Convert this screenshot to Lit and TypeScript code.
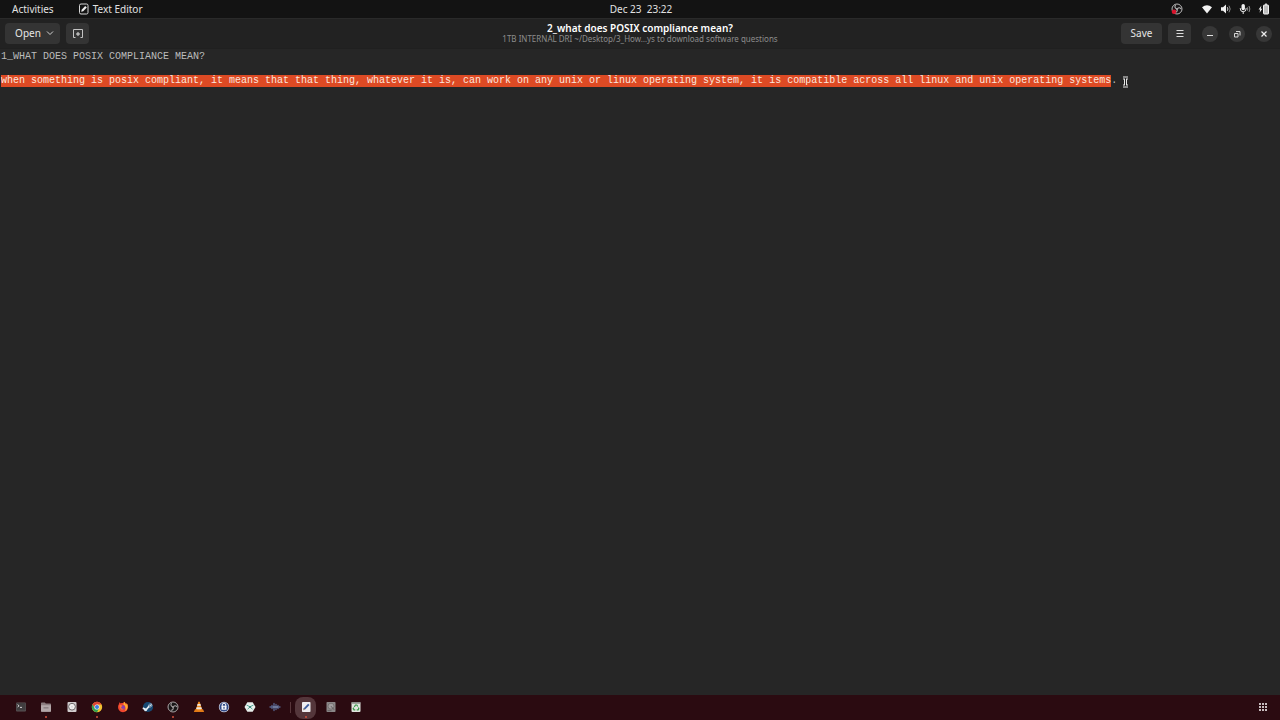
import { LitElement, html, css, svg } from "lit";
import { customElement, query } from "lit/decorators.js";

const TEXT = `1_WHAT DOES POSIX COMPLIANCE MEAN?

when something is posix compliant, it means that that thing, whatever it is, can work on any unix or linux operating system, it is compatible across all linux and unix operating systems.`;

interface DockItem {
  name: string;
  art: unknown;
  running?: boolean;
  active?: boolean;
}

const obs = (line: string) => svg`
  <circle cx="6" cy="6" r="5" fill="#181617" stroke=${line} stroke-width="1"/>
  <path d="M5.6 5.8C3.8 5.2 3.4 3.4 4.6 2.1M6.5 5.7C7.6 4.2 9.3 4.4 10 6M6.1 6.5C6.6 8.3 5.4 9.5 3.7 9.2" fill="none" stroke=${line} stroke-width="1.1"/>
  <circle cx="6" cy="6" r="1" fill=${line}/>`;

const pinned: DockItem[] = [
  { name: "Terminal", art: svg`<rect x="1" y="1.5" width="10" height="9" rx="1" fill="#5a5557"/><rect x="1.5" y="2" width="9" height="7.5" rx=".5" fill="#403d3f"/><path d="M2.6 3.6l1.5 1.2-1.5 1.2M5 6.4h2" fill="none" stroke="#e4e2e3" stroke-width=".9"/>` },
  { name: "Files", running: true, art: svg`<path d="M1 2.3q0-.8.8-.8h3l1 1h4.4q.8 0 .8.8V10q0 .8-.8.8H1.8Q1 10.800 1 10z" fill="#8c7d80"/><path d="M1 4.200h10V10q0 .8-.8.8H1.800Q1 10.800 1 10z" fill="#b3a7a9"/><rect x="3.500" y="6" width="5" height="1.600" fill="#8f8386"/>` },
  { name: "Disks", art: svg`<rect x="1.500" y="1" width="9" height="10" rx="1" fill="#d2cdcf"/><circle cx="6" cy="5.700" r="3.400" fill="#f1efef" stroke="#6c6769" stroke-width="1"/><circle cx="6" cy="5.700" r="1" fill="#dcd8da"/>` },
  { name: "Google Chrome", running: true, art: svg`<circle cx="6" cy="6" r="5.200" fill="#f3c332"/><path d="M1.500 3.400A5.200 5.200 0 0 1 10.500 3.400H6L3.750 7.300z" fill="#dc4434"/><path d="M1.500 3.400A5.200 5.200 0 0 0 6 11.200L8.200 7.300H3.750z" fill="#32a252"/><circle cx="6" cy="6" r="2.600" fill="#f3f3f3"/><circle cx="6" cy="6" r="2" fill="#3c7ee0"/>` },
  { name: "Firefox", art: svg`<path d="M2 3l.4-1.700 1.400 1.200C5 1.800 5.500 2 6.300 2.200L7 .7C8.300 1.300 9 2.600 9.100 3.100l.7-.8C12.500 6.500 10.100 11.200 6 11.200 1.800 11.200-.3 6.500 2 3z" fill="#f0452f"/><path d="M7 .7c1.600 1.300 1.500 2.500 2.200 3.400l.6-1.800c2 3.700.3 7.200-2.100 8C9.500 8.500 8.500 4.200 6.300 3.600z" fill="#ffae32"/><circle cx="5.700" cy="6.500" r="2.300" fill="#8142b5"/><path d="M2.500 4.200c1.300-.3 2.200 0 3 .8L4 6.200c.4 1.400 1.900 1.800 3 1.300C5.800 9.700 2.600 8.900 2.500 4.200z" fill="#ff762e"/>` },
  { name: "Steam", art: svg`<circle cx="6" cy="6" r="5.100" fill="#174872"/><path d="M1 6.300l3 1.200 2-2.200.3-1.300 1.600-1.600 2 .4.500 1.800-1.600 1.700-1.700.3-1.700 1.900-.8 1.500-1.800.2-1-1.600-1.300-.6z" fill="#e6eef4"/><circle cx="8.200" cy="4.300" r="1.200" fill="#e6eef4" stroke="#174872" stroke-width=".7"/>` },
  { name: "OBS Studio", running: true, art: obs("#aaa4a6") },
  { name: "VLC media player", art: svg`<path d="M2 8.200h8l1.200 2.800H.8z" fill="#e17a17"/><path d="M5.300.8h1.400l2.500 8q-3.200 1.500-6.400 0z" fill="#ef8b20"/><path d="M4.600 3h2.800l.6 1.800H4zM3.600 6.200h4.800l.5 1.600q-2.900 1-5.800 0z" fill="#eee7df"/>` },
  { name: "KeePassXC", art: svg`<circle cx="6" cy="6" r="5.200" fill="#d5d9e8"/><circle cx="6" cy="6" r="4.500" fill="#304986"/><path d="M4.200 5V4a1.800 1.800 0 0 1 3.600 0v1" fill="none" stroke="#fff" stroke-width="1"/><rect x="3.500" y="4.800" width="5" height="4" rx=".5" fill="#f6f7fb"/><rect x="5.400" y="5.800" width="1.200" height="2" fill="#304986"/>` },
  { name: "Password manager", art: svg`<path d="M3.300 1.200h5.400L11.500 6l-2.800 4.800H3.300L.5 6z" fill="#e9efec"/><path d="M2.500 4l3.500 1.800L9.500 4M3.500 8.400L6 5.800l2.500 2.600" fill="none" stroke="#57a99a" stroke-width="1"/><circle cx="6" cy="6" r="1" fill="#2f8072"/>` },
  { name: "Audio tool", art: svg`<path d="M1 6h10M3 4.500v3M5 2.500v7M7 3.500v5M9 4.500v3" fill="none" stroke="#56618a" stroke-width="1.400" stroke-linecap="round"/><path d="M4 6h5" stroke="#8995b2" stroke-width="1"/>` },
];

const others: DockItem[] = [
  { name: "Text Editor", running: true, active: true, art: svg`<rect x="2" y="1" width="8.500" height="10" rx=".8" fill="#eeedf1"/><path d="M3.200 9.200l.6-2 4.300-4.500 1.400 1.300-4.400 4.500z" fill="#3d5d9e"/><path d="M3.200 9.200l.6-2 1.300 1.300z" fill="#c2a36c"/>` },
  { name: "Disk volume", art: svg`<rect x="1.500" y="1" width="9" height="10" rx=".8" fill="#8b8788"/><circle cx="6" cy="5.200" r="3" fill="#a29e9f" stroke="#6d696a" stroke-width=".8"/><path d="M6 5.200l3 3.500" stroke="#5f5b5c" stroke-width="1"/><rect x="2.500" y="9.200" width="4" height=".9" fill="#656162"/>` },
  { name: "Trash", art: svg`<rect x="1.500" y="1" width="9" height="10" rx="1" fill="#e2e5df"/><rect x="1.500" y="1" width="9" height="1.800" rx=".8" fill="#8e918c"/><path d="M4.300 5.800L5.500 4h1.300l1 1.500M8.400 6.500l.4 1.200-.7 1.200H6.700M5.300 8.900H4l-.8-1.200.6-1.100" fill="none" stroke="#3b9a4c" stroke-width="1.200"/>` },
];

@customElement("app-root")
export class AppRoot extends LitElement {
  static styles = css`
    :host {
      display: flex;
      flex-direction: column;
      min-height: 100vh;
      background: #262626;
      color: #e6e6e6;
      font: 10px/12px "Noto Sans", "Open Sans", sans-serif;
    }
    * { box-sizing: border-box; }
    svg { display: block; }
    button {
      font: inherit;
      color: inherit;
      border: 0;
      padding: 0;
      background: none;
      display: flex;
      align-items: center;
      justify-content: center;
    }
    .topbar {
      display: grid;
      grid-template-columns: 1fr auto 1fr;
      align-items: center;
      height: 18px;
      padding: 0 10px 0 12px;
      background: #131313;
      color: #e2e2e2;
    }
    .left { display: flex; gap: 24px; }
    .app { gap: 3px; }
    .clock { white-space: pre; }
    .tray { display: flex; justify-content: flex-end; align-items: center; gap: 7px; }
    .recorder { margin-right: 11px; }
    .header {
      display: grid;
      grid-template-columns: 1fr auto 1fr;
      align-items: center;
      height: 31px;
      padding: 0 5px;
      background: #222;
      border-top: 1px solid #2a2a2a;
      border-bottom: 1px solid #202020;
    }
    .group { display: flex; align-items: center; gap: 6px; }
    .end { justify-content: flex-end; }
    .btn { height: 21px; padding-bottom: 2px; border-radius: 4px; background: #343434; }
    .open { width: 55px; gap: 5px; padding-left: 4px; }
    .save { width: 41px; }
    .square { width: 23px; }
    .windows { display: flex; gap: 11px; padding: 0 3px 0 5px; }
    .round { width: 16px; height: 16px; border-radius: 50%; background: #373737; }
    .titles { text-align: center; }
    .title { margin: 0; font-size: 10px; line-height: 11px; font-weight: 600; color: #fff; }
    .path { margin: 0; font-size: 8px; line-height: 10px; color: #8c8c8c; }
    .editor { position: relative; flex: 1; display: flex; }
    .text {
      flex: 1;
      resize: none;
      border: 0;
      outline: 0;
      margin: 0;
      padding: 2px 1px;
      background: #262626;
      color: #bcbcbc;
      caret-color: transparent;
      font: 10px/12px "Liberation Mono", monospace;
    }
    .text::selection { background: #dd4a24; color: #fbe6df; }
    .pointer { position: absolute; left: 1121px; top: 27px; }
    .dock {
      display: flex;
      align-items: center;
      height: 25px;
      padding: 0 10px 0 8px;
      background: #2b0b11;
    }
    .apps { display: flex; }
    .pinned { width: 280px; }
    .others { width: 76px; }
    .slot { position: relative; flex: 1; height: 24px; padding-bottom: 1px; }
    .active::before {
      content: "";
      position: absolute;
      inset: 1px 2px;
      border-radius: 8px;
      background: #54363b;
    }
    .slot svg { position: relative; }
    .running::after {
      content: "";
      position: absolute;
      bottom: 2px;
      left: 50%;
      width: 2px;
      height: 2px;
      margin-left: -1px;
      border-radius: 50%;
      background: #d3513c;
    }
    .rule { width: 1px; height: 11px; margin: 0 2px; background: #58363b; }
    .grid { margin-left: auto; width: 14px; height: 24px; padding-bottom: 1px; }
  `;

  @query(".text") private editor!: HTMLTextAreaElement;

  firstUpdated() {
    this.editor.focus();
    this.editor.setSelectionRange(TEXT.indexOf("when"), TEXT.length - 1);
  }

  private slotButton(item: DockItem) {
    return html`<button
      class="slot ${item.running ? "running" : ""} ${item.active ? "active" : ""}"
      aria-label=${item.name}
    ><svg width="12" height="12" viewBox="0 0 12 12">${item.art}</svg></button>`;
  }

  render() {
    return html`
      <header class="topbar">
        <div class="left">
          <button>Activities</button>
          <button class="app">
            <svg width="12" height="12" viewBox="0 0 12 12"><rect x="1.500" y="1" width="8.500" height="10" rx="1.500" fill="none" stroke="#d8d8d8"/><path d="M3.200 8.800l.5-2.100 3.500-3.600 1.600 1.500-3.600 3.700z" fill="#f0f0f0"/></svg>
            Text Editor
          </button>
        </div>
        <button class="clock">Dec 23  23:22</button>
        <div class="tray">
          <svg class="recorder" width="12" height="12" viewBox="0 0 12 12">${obs("#b9b9b9")}<circle cx="3" cy="8.700" r="2.300" fill="#d9142c"/></svg>
          <svg width="12" height="12" viewBox="0 0 12 12"><path d="M1 4.300Q6 .2 11 4.300L6 10.500z" fill="#f2f2f2"/></svg>
          <svg width="12" height="12" viewBox="0 0 12 12"><path d="M1 4.300h2l3-2.800v9L3 7.800H1z" fill="#f2f2f2"/><path d="M7.300 4.200q1.300 1.800 0 3.600" fill="none" stroke="#ddd"/><path d="M9 2.700q2.400 3.300 0 6.600" fill="none" stroke="#888"/></svg>
          <svg width="12" height="12" viewBox="0 0 12 12"><rect x="2.500" y="1" width="3.400" height="6.200" rx="1.700" fill="#f2f2f2"/><path d="M1.300 5v.8a2.900 2.900 0 0 0 5.800 0V5M4.200 8.700V11" fill="none" stroke="#e8e8e8"/><path d="M8.300 4.300q1 1.700 0 3.400M10 3q1.700 3 0 6" fill="none" stroke="#909090"/></svg>
          <svg width="12" height="12" viewBox="0 0 12 12"><path d="M3.400 2.500L.6 6.500h1.500l-.5 3.200 2.700-4H2.800z" fill="#f2f2f2"/><rect x="5.500" y="2" width="5" height="9" rx=".6" fill="#bdbdbd" stroke="#f2f2f2"/><rect x="7" y=".6" width="2" height="1.200" fill="#f2f2f2"/></svg>
        </div>
      </header>
      <div class="header">
        <div class="group">
          <button class="btn open">Open
            <svg width="8" height="8" viewBox="0 0 8 8"><path d="M1 2.500l3 3 3-3" fill="none" stroke="#d0d0d0"/></svg>
          </button>
          <button class="btn square" aria-label="New document">
            <svg width="12" height="12" viewBox="0 0 12 12"><path d="M3.500 10.500H1.500V2.500h9v8H8.500" fill="none" stroke="#c4c4c4"/><path d="M6 5v4M4 7h4" stroke="#e0e0e0"/></svg>
          </button>
        </div>
        <div class="titles">
          <h1 class="title">2_what does POSIX compliance mean?</h1>
          <p class="path">1TB INTERNAL DRI ~/Desktop/3_How…ys to download software questions</p>
        </div>
        <div class="group end">
          <button class="btn save">Save</button>
          <button class="btn square" aria-label="Menu">
            <svg width="8" height="8" viewBox="0 0 8 8"><path d="M.5 1.500h7M.5 4.500h7M.5 7.500h7" stroke="#dcdcdc"/></svg>
          </button>
          <div class="windows">
            <button class="round" aria-label="Minimize"><svg width="8" height="8" viewBox="0 0 8 8"><path d="M1 5.500h6" stroke="#e0e0e0"/></svg></button>
            <button class="round" aria-label="Restore"><svg width="8" height="8" viewBox="0 0 8 8"><path d="M1.500 3.500h3.500v3.500H1.500zM3 1.500h4V5.500" fill="none" stroke="#d8d8d8"/></svg></button>
            <button class="round" aria-label="Close"><svg width="8" height="8" viewBox="0 0 8 8"><path d="M1.500 1.500l5 5M6.500 1.500l-5 5" stroke="#eee" stroke-width="1.200"/></svg></button>
          </div>
        </div>
      </div>
      <main class="editor">
        <textarea class="text" aria-label="Document" spellcheck="false" .value=${TEXT}></textarea>
        <svg class="pointer" width="9" height="12" viewBox="0 0 9 12"><path d="M2 2h5M4.500 2v8M2 10h5" fill="none" stroke="#e8e8e8" stroke-width="3"/><path d="M2 2h5M4.500 2v8M2 10h5" fill="none" stroke="#1c1c1c" stroke-width="1"/></svg>
      </main>
      <nav class="dock" aria-label="Dock">
        <div class="apps pinned">${pinned.map((i) => this.slotButton(i))}</div>
        <span class="rule"></span>
        <div class="apps others">${others.map((i) => this.slotButton(i))}</div>
        <button class="grid" aria-label="Show applications">
          <svg width="8" height="8" viewBox="0 0 8 8"><path d="M0 0h2v2H0zM3 0h2v2H3zM6 0h2v2H6zM0 3h2v2H0zM3 3h2v2H3zM6 3h2v2H6zM0 6h2v2H0zM3 6h2v2H3zM6 6h2v2H6z" fill="#c9bdbf"/></svg>
        </button>
      </nav>
    `;
  }
}
